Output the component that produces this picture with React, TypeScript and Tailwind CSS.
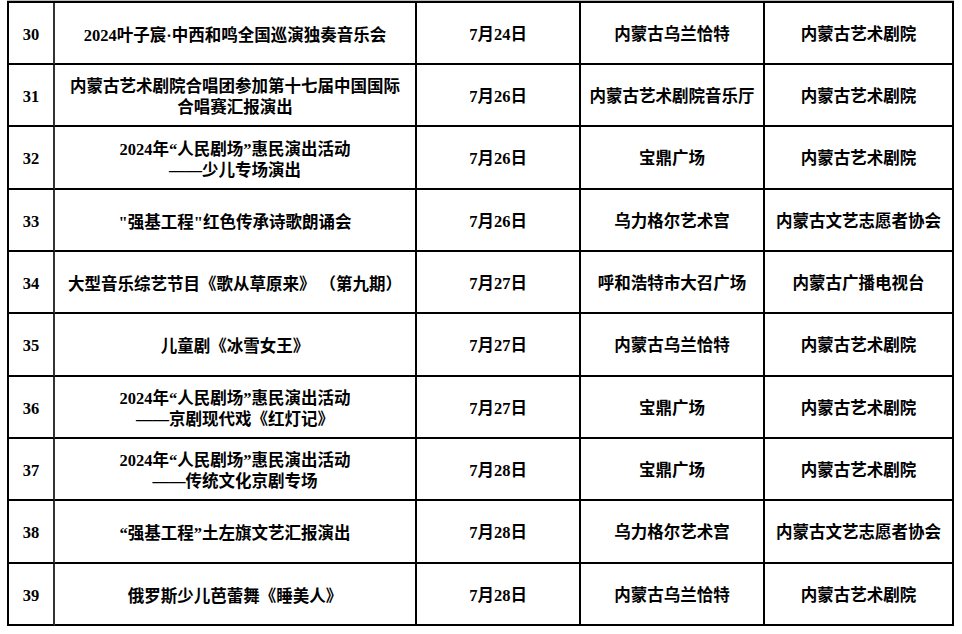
// 演出活动一览表（第30至39项）

type Row = {
  no: number;
  title: string[];
  date: string;
  venue: string;
  host: string;
  h: string;
};

const rows: Row[] = [
  { no: 30, title: ["2024叶子宸·中西和鸣全国巡演独奏音乐会"], date: "7月24日", venue: "内蒙古乌兰恰特", host: "内蒙古艺术剧院", h: "h-[62px]" },
  { no: 31, title: ["内蒙古艺术剧院合唱团参加第十七届中国国际", "合唱赛汇报演出"], date: "7月26日", venue: "内蒙古艺术剧院音乐厅", host: "内蒙古艺术剧院", h: "h-[62px]" },
  { no: 32, title: ["2024年“人民剧场”惠民演出活动", "——少儿专场演出"], date: "7月26日", venue: "宝鼎广场", host: "内蒙古艺术剧院", h: "h-[63px]" },
  { no: 33, title: ["\"强基工程\"红色传承诗歌朗诵会"], date: "7月26日", venue: "乌力格尔艺术宫", host: "内蒙古文艺志愿者协会", h: "h-[62px]" },
  { no: 34, title: ["大型音乐综艺节目《歌从草原来》 （第九期）"], date: "7月27日", venue: "呼和浩特市大召广场", host: "内蒙古广播电视台", h: "h-[62px]" },
  { no: 35, title: ["儿童剧《冰雪女王》"], date: "7月27日", venue: "内蒙古乌兰恰特", host: "内蒙古艺术剧院", h: "h-[63px]" },
  { no: 36, title: ["2024年“人民剧场”惠民演出活动", "——京剧现代戏《红灯记》"], date: "7月27日", venue: "宝鼎广场", host: "内蒙古艺术剧院", h: "h-[62px]" },
  { no: 37, title: ["2024年“人民剧场”惠民演出活动", "——传统文化京剧专场"], date: "7月28日", venue: "宝鼎广场", host: "内蒙古艺术剧院", h: "h-[62px]" },
  { no: 38, title: ["“强基工程”土左旗文艺汇报演出"], date: "7月28日", venue: "乌力格尔艺术宫", host: "内蒙古文艺志愿者协会", h: "h-[63px]" },
  { no: 39, title: ["俄罗斯少儿芭蕾舞《睡美人》"], date: "7月28日", venue: "内蒙古乌兰恰特", host: "内蒙古艺术剧院", h: "h-[62px]" },
];

const cell = "flex items-center justify-center text-center pt-[4px] border-r-2 border-b-2 border-black";

export default function App() {
  return (
    <div className="w-[962px] h-[634px] bg-white overflow-hidden pl-[7px] font-['Liberation_Serif','Noto_Sans_CJK_SC',serif] font-bold text-[16.5px] text-black [text-spacing-trim:space-all]">
      <div className="h-[1px] w-[947px] bg-[#bbb]" />
      <div className="w-[947px] border-l-2 border-t-2 border-black">
        {rows.map((r) => (
          <div key={r.no} className={`grid grid-cols-[46px_362px_164px_184px_189px] ${r.h}`}>
            <div className={`${cell} border-r-[#333]`}>{r.no}</div>
            <div className={`${cell} flex-col leading-[21px] whitespace-pre`}>
              {r.title.map((t) => (
                <span key={t}>{t}</span>
              ))}
            </div>
            <div className={cell}>{r.date}</div>
            <div className={cell}>{r.venue}</div>
            <div className={cell}>{r.host}</div>
          </div>
        ))}
      </div>
    </div>
  );
}
